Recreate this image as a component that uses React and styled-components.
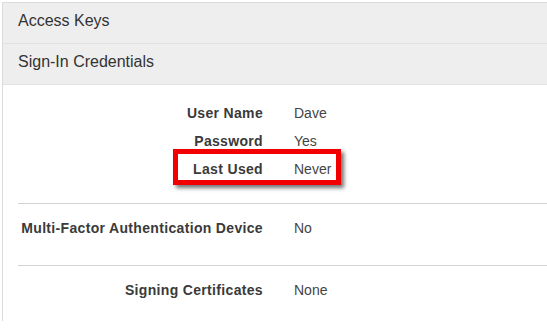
import React from "react";
import styled, { createGlobalStyle } from "styled-components";

const GlobalStyle = createGlobalStyle`
  html, body {
    margin: 0;
    padding: 0;
    background: #fff;
  }
  body {
    font-family: "Liberation Sans", Arial, sans-serif;
    color: #444;
  }
`;

const Panel = styled.div`
  margin: 2px 0 0 2px;
  border-top: 1px solid #dcdcdc;
  border-left: 1px solid #dcdcdc;
  height: 319px;
  box-sizing: border-box;
`;

const Header = styled.div`
  height: 41px;
  box-sizing: border-box;
  display: flex;
  align-items: center;
  padding: 0 0 5px 15px;
  background: #eeeeee;
  border-bottom: 1px solid #e2e2e2;
  font-size: 16px;
  color: #333;
`;

const Section = styled.div`
  padding: ${(p) => p.$pad};
  margin-left: 15px;
  border-top: ${(p) => (p.$line ? "1px solid #d3d3d3" : "none")};
`;

const Row = styled.div`
  position: relative;
  display: grid;
  grid-template-columns: 245px 1fr;
  column-gap: 31px;
  height: 28px;
  align-items: center;
  font-size: 14px;
`;

const Label = styled.div`
  text-align: right;
  font-weight: bold;
  letter-spacing: 0.33px;
  color: #3a3a3a;
`;

const Value = styled.div`
  color: #444;
`;

const Highlight = styled.div`
  position: absolute;
  left: 155px;
  top: -6px;
  width: 168px;
  height: 36px;
  box-sizing: border-box;
  border: 5px solid #f20000;
  box-shadow: 3px 3px 4px rgba(0, 0, 0, 0.55);
  pointer-events: none;
`;

const Field = ({ label, value, highlight }) => (
  <Row>
    <Label>{label}</Label>
    <Value>{value}</Value>
    {highlight && <Highlight />}
  </Row>
);

export default function App() {
  return (
    <>
      <GlobalStyle />
      <Panel>
        <Header>Access Keys</Header>
        <Header>Sign-In Credentials</Header>
        <Section $pad="14px 0 20px">
          <Field label="User Name" value="Dave" />
          <Field label="Password" value="Yes" />
          <Field label="Last Used" value="Never" highlight />
        </Section>
        <Section $line $pad="10px 0 23px">
          <Field label="Multi-Factor Authentication Device" value="No" />
        </Section>
        <Section $line $pad="10px 0 0">
          <Field label="Signing Certificates" value="None" />
        </Section>
      </Panel>
    </>
  );
}
